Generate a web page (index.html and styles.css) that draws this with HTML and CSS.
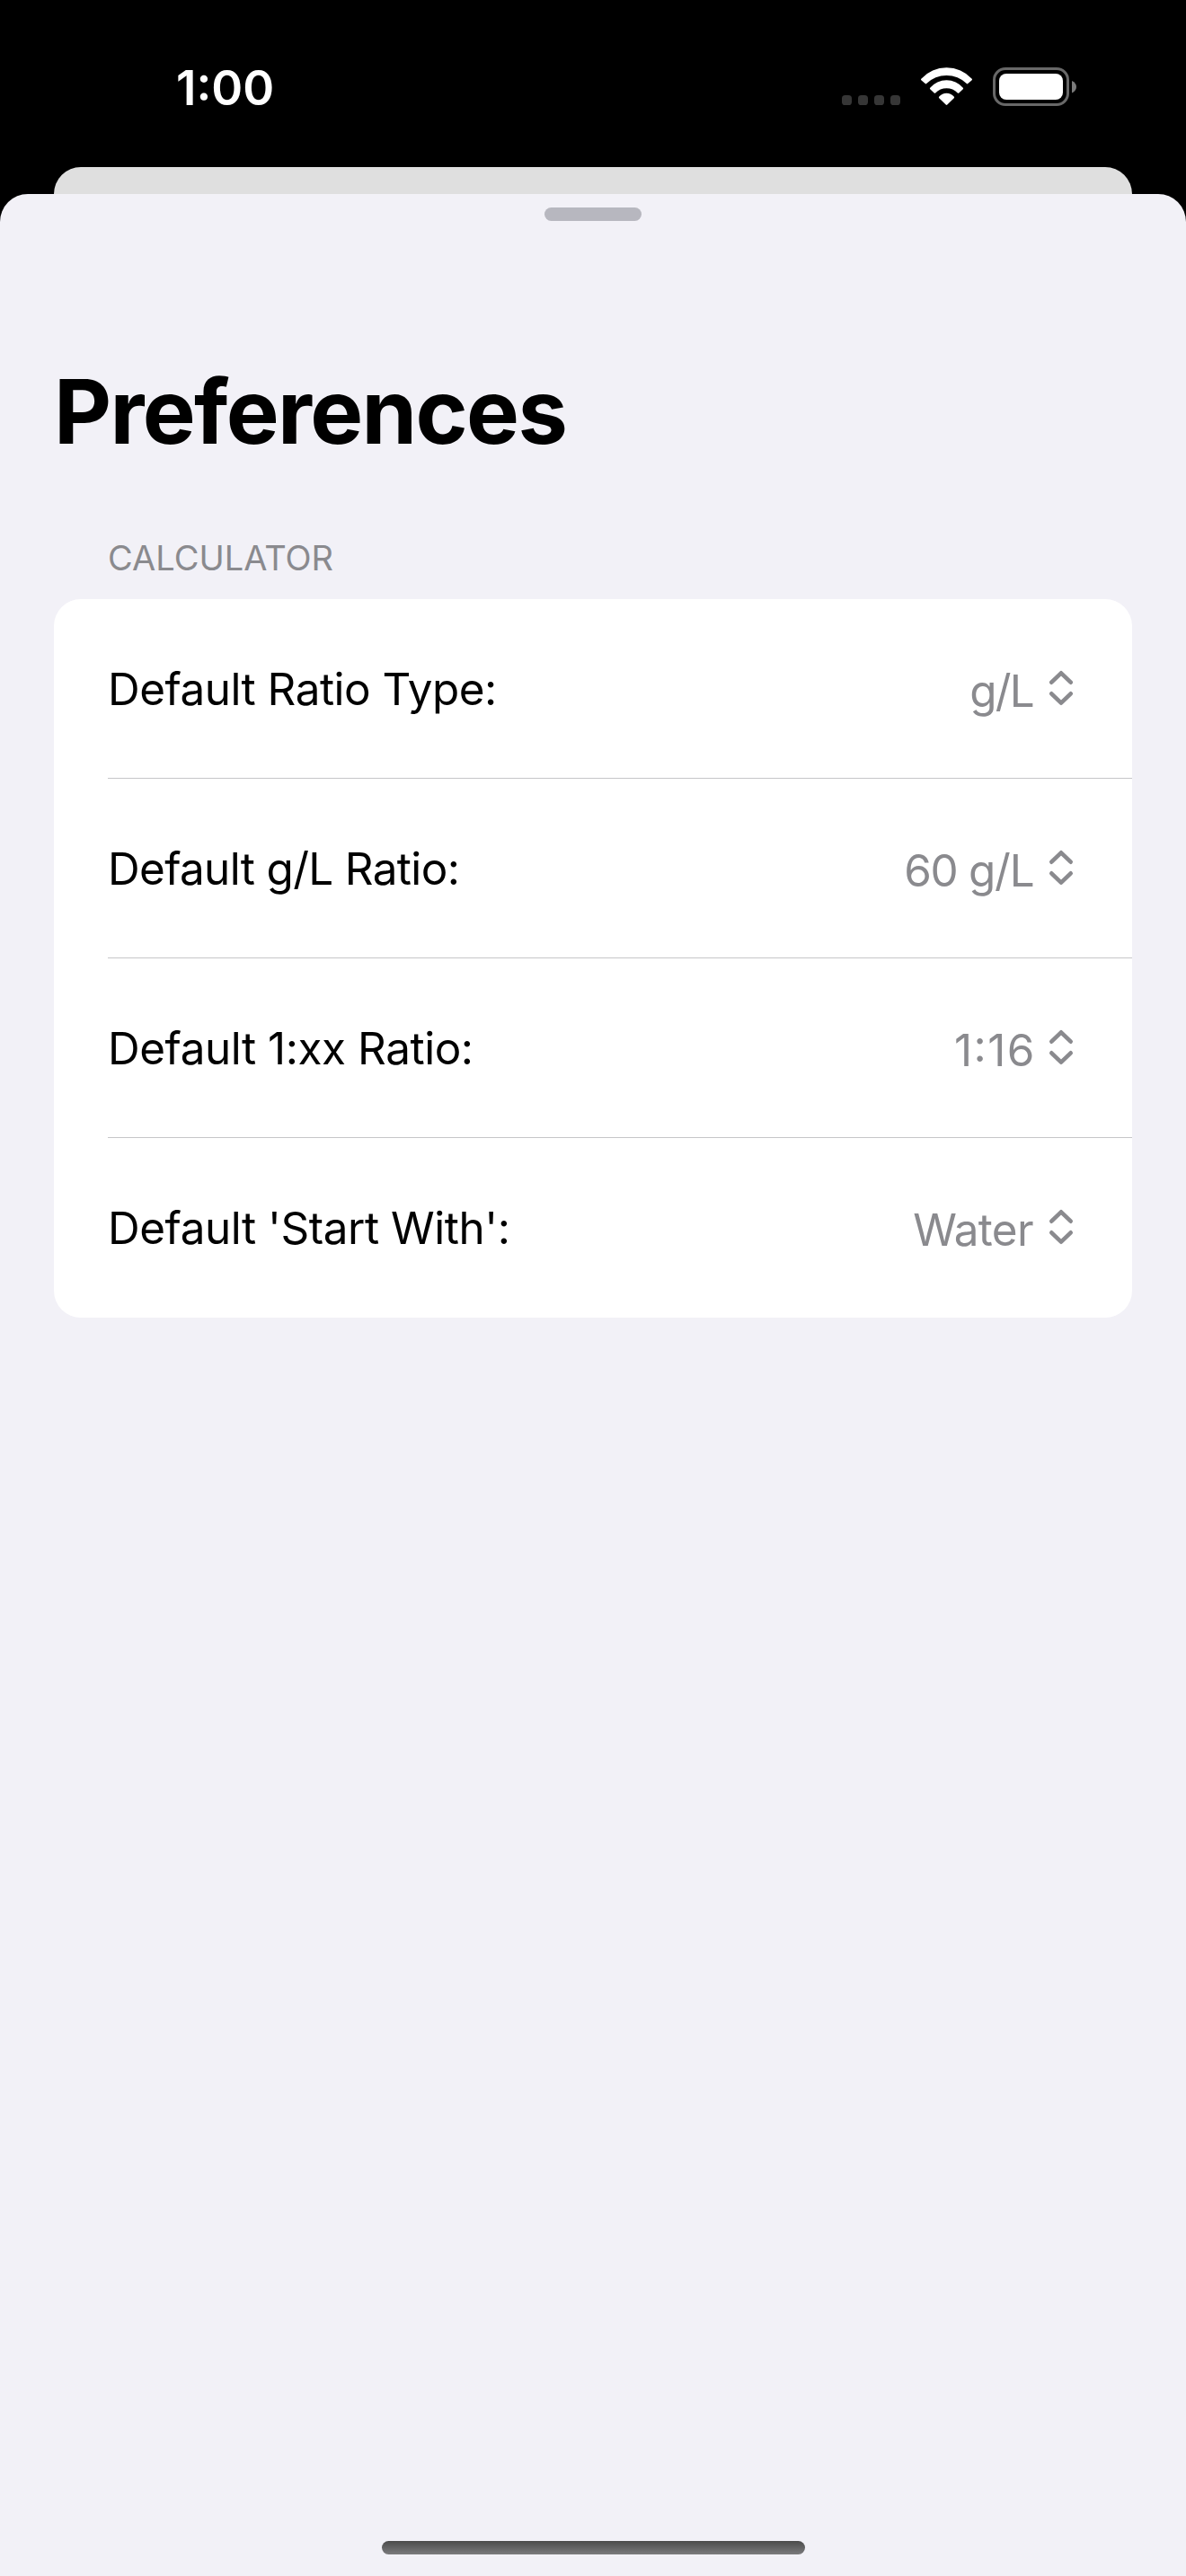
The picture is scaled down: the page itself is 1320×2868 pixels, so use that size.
FILE: index.html
```html
<!DOCTYPE html>
<html lang="en">
<head>
<meta charset="utf-8">
<title>Preferences</title>
<link rel="stylesheet" href="styles.css">
</head>
<body>
<div class="screen">
  <header class="status">
    <span class="time">1:00</span>
    <svg class="status-icons" width="262" height="44" viewBox="0 0 262 44">
      <g fill="#363636">
        <rect x="0" y="31" width="11" height="11" rx="3.6"/>
        <rect x="18" y="31" width="11" height="11" rx="3.6"/>
        <rect x="36" y="31" width="11" height="11" rx="3.6"/>
        <rect x="54" y="31" width="11" height="11" rx="3.6"/>
      </g>
      <g fill="#fff">
        <path d="M88.300 12.800A38.100 38.100 0 0 1 144.700 12.800Q145.300 13.500 144.700 14.200L140.300 18.100Q139.500 18.700 138.800 18.100A31.900 31.900 0 0 0 94.200 18.100Q93.500 18.700 92.700 18.100L88.300 14.200Q87.700 13.500 88.300 12.800Z"/>
        <path d="M98.200 22.700A24.100 24.100 0 0 1 134.800 22.700Q135.500 23.500 134.800 24.200L130.300 28.500Q129.500 29.100 128.800 28.500A16.900 16.900 0 0 0 104.200 28.500Q103.500 29.100 102.700 28.500L98.200 24.200Q97.500 23.500 98.200 22.700Z"/>
        <path d="M108.300 32.600A10.600 10.600 0 0 1 124.700 32.600Q125.600 33.400 124.800 34.200L117.300 41.600Q116.500 42.400 115.700 41.600L108.200 34.200Q107.400 33.400 108.300 32.600Z"/>
      </g>
      <rect x="169.500" y="1.500" width="82" height="40" rx="12.500" fill="none" stroke="#686868" stroke-width="3"/>
      <rect x="175" y="7" width="71" height="29" rx="8" fill="#fff"/>
      <path d="M256 15Q261 17.500 261 21.700T256 28.500Z" fill="#7b7b7b"/>
    </svg>
  </header>
  <div class="behind"></div>
  <main class="sheet">
    <div class="grabber"></div>
    <h1 class="title">Preferences</h1>
    <h2 class="section">CALCULATOR</h2>
    <section class="card">
      <div class="row ratio-type"><span class="label">Default Ratio Type:</span><span class="value">g/L</span><svg class="chev" width="28" height="40" viewBox="0 0 28 40"><path d="M3.300 13.700 14 3.300 24.700 13.700M3.300 26.300 14 36.700 24.700 26.300"/></svg></div>
      <div class="row gl-ratio"><span class="label">Default g/L Ratio:</span><span class="value">60 g/L</span><svg class="chev" width="28" height="40" viewBox="0 0 28 40"><path d="M3.300 13.700 14 3.300 24.700 13.700M3.300 26.300 14 36.700 24.700 26.300"/></svg></div>
      <div class="row parts-ratio"><span class="label">Default 1:xx Ratio:</span><span class="value">1:16</span><svg class="chev" width="28" height="40" viewBox="0 0 28 40"><path d="M3.300 13.700 14 3.300 24.700 13.700M3.300 26.300 14 36.700 24.700 26.300"/></svg></div>
      <div class="row start-with"><span class="label">Default 'Start With':</span><span class="value">Water</span><svg class="chev" width="28" height="40" viewBox="0 0 28 40"><path d="M3.300 13.700 14 3.300 24.700 13.700M3.300 26.300 14 36.700 24.700 26.300"/></svg></div>
    </section>
    <div class="home"></div>
  </main>
</div>
</body>
</html>
```
FILE: styles.css
```css
* { box-sizing: border-box; margin: 0; }
body { background: #000; font-family: Inter, "Liberation Sans", sans-serif; }
.screen { width: 1320px; height: 2868px; background: #000; display: flex; flex-direction: column; overflow: hidden; }

.status { height: 186px; flex: none; display: flex; justify-content: space-between; align-items: flex-start; padding: 66px 121px 0 196px; }
.time { color: #fff; font-size: 53px; line-height: 65px; font-weight: 600; }
.status-icons { display: block; margin-top: 9px; }

.behind { height: 30px; flex: none; margin: 0 60px; background: #dfdfdf; border-radius: 30px 30px 0 0; }
.sheet { flex: 1; background: #f2f1f7; border-radius: 31px 31px 0 0; display: flex; flex-direction: column; padding: 15px 60px 24px; }
.grabber { width: 108px; height: 15px; flex: none; border-radius: 8px; background: #b7b7bf; align-self: center; }
.title { font-size: 99px; line-height: 120px; font-weight: 700; letter-spacing: -1.66px; margin-top: 152px; }
.section { font-size: 38px; line-height: 46px; font-weight: 400; color: #8a8a8e; margin: 80px 0 0 60px; }

.card { background: #fff; border-radius: 30px; margin-top: 23px; padding-left: 60px; }
.row { height: 200px; display: flex; align-items: center; padding-right: 65px; box-shadow: inset 0 -1px #c6c6c8; }
.row:last-child { box-shadow: none; }
.label { font-size: 49.4px; line-height: 60px; letter-spacing: -0.5px; flex: 1; }
.value { font-size: 49.4px; line-height: 60px; color: #8a8a8e; margin-top: 4px; font-feature-settings: "calt" 1; }
.chev { fill: none; stroke: #8a8a8e; stroke-width: 4.6; stroke-linecap: round; stroke-linejoin: round; margin-bottom: 2px; }

.ratio-type .value { letter-spacing: -1.8px; margin-right: 17.2px; }
.gl-ratio .label { letter-spacing: -0.64px; }
.gl-ratio .value { letter-spacing: -1.27px; margin-right: 16.7px; }
.parts-ratio .label { letter-spacing: -0.44px; }
.parts-ratio .value { letter-spacing: 1.4px; margin-right: 14.3px; }
.start-with .label { letter-spacing: -0.44px; }
.start-with .value { letter-spacing: -0.67px; margin-right: 17.1px; }

.home { width: 471px; height: 15px; flex: none; border-radius: 8px; margin-top: auto; align-self: center; background: linear-gradient(#4b4b4b, #7b7b7d); }
```
